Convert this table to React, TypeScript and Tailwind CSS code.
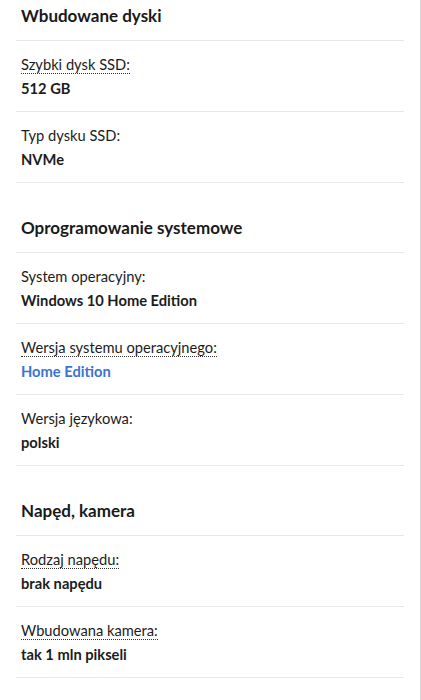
type Spec = {
  label: string;
  value: string;
  hint?: boolean;
  link?: boolean;
};

type Section = {
  title: string;
  items: Spec[];
};

const SECTIONS: Section[] = [
  {
    title: "Wbudowane dyski",
    items: [
      { label: "Szybki dysk SSD:", value: "512 GB", hint: true },
      { label: "Typ dysku SSD:", value: "NVMe" },
    ],
  },
  {
    title: "Oprogramowanie systemowe",
    items: [
      { label: "System operacyjny:", value: "Windows 10 Home Edition" },
      {
        label: "Wersja systemu operacyjnego:",
        value: "Home Edition",
        hint: true,
        link: true,
      },
      { label: "Wersja językowa:", value: "polski" },
    ],
  },
  {
    title: "Napęd, kamera",
    items: [
      { label: "Rodzaj napędu:", value: "brak napędu", hint: true },
      { label: "Wbudowana kamera:", value: "tak 1 mln pikseli", hint: true },
    ],
  },
];

function SpecRow({ item }: { item: Spec }) {
  return (
    <div className="mx-4 border-t border-[#e8e8e8] px-[5px] py-[11px]">
      <div className="text-[14.7px] leading-6 text-[#1c1c1c]">
        {item.hint ? (
          <span className="border-b border-dotted border-[#333]">{item.label}</span>
        ) : (
          item.label
        )}
      </div>
      <div
        className={[
          "text-[14.7px] font-bold leading-6",
          item.link ? "text-[#3d74cf]" : "text-[#1c1c1c]",
        ].join(" ")}
      >
        {item.value}
      </div>
    </div>
  );
}

export default function App() {
  return (
    <div
      className="min-h-[700px] w-[421px] border-r border-[#d4d4d4] bg-white"
      style={{ fontFamily: "Lato, 'Open Sans', sans-serif" }}
    >
      {SECTIONS.map((section, i) => (
        <section key={section.title}>
          <h2
            className={[
              "mx-4 px-[5px] pb-[12px] text-[17px] font-bold leading-6 text-[#1a1a1a]",
              i === 0 ? "pt-[4px]" : "border-t border-[#e8e8e8] pt-[33px]",
            ].join(" ")}
          >
            {section.title}
          </h2>
          {section.items.map((item) => (
            <SpecRow key={item.label} item={item} />
          ))}
        </section>
      ))}
      <div className="mx-4 border-t border-[#e8e8e8]" />
    </div>
  );
}
